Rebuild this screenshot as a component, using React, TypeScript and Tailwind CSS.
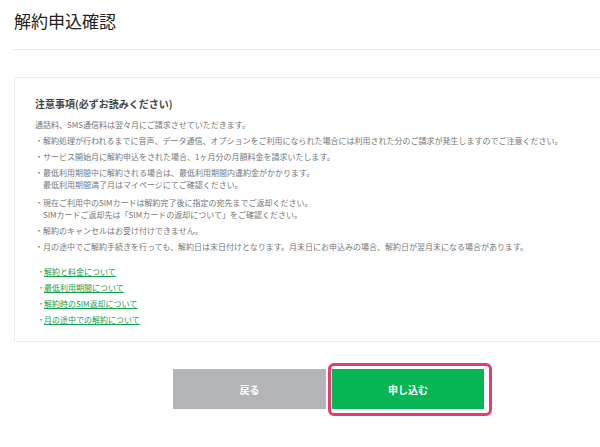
import React from "react";

const items: string[][] = [
  ["解約処理が行われるまでに音声、データ通信、オプションをご利用になられた場合には利用された分のご請求が発生しますのでご注意ください。"],
  ["サービス開始月に解約申込をされた場合、1ヶ月分の月額料金を請求いたします。"],
  ["最低利用期間中に解約される場合は、最低利用期間内違約金がかかります。", "最低利用期間満了月はマイページにてご確認ください。"],
  ["現在ご利用中のSIMカードは解約完了後に指定の宛先までご返却ください。", "SIMカードご返却先は「SIMカードの返却について」をご確認ください。"],
  ["解約のキャンセルはお受け付けできません。"],
  ["月の途中でご解約手続きを行っても、解約日は末日付けとなります。月末日にお申込みの場合、解約日が翌月末になる場合があります。"],
];

const links = [
  "解約と料金について",
  "最低利用期間について",
  "解約時のSIM返却について",
  "月の途中での解約について",
];

export default function App() {
  return (
    <div
      className="w-[600px] h-[447px] overflow-hidden bg-white"
      style={{ fontFamily: '"Noto Sans CJK JP", "Noto Sans", sans-serif' }}
    >
      <div className="w-[643px] pl-[14px]">
        <div className="h-[49px] pt-[9px]">
          <h1 className="text-[17px] leading-[24px] text-[#222] font-normal">解約申込確認</h1>
        </div>
        <div className="border-t border-[#e8e8e8] -ml-[1px]" />
        <div className="mt-[27px] border border-[#ececec] pl-[20px] pr-[20px] pt-[19px] pb-[13px]">
          <h2 className="text-[10px] leading-[14px] font-bold text-[#444]">注意事項(必ずお読みください)</h2>
          <div className="mt-[8px] text-[8px] leading-[12px] text-[#777]">
            <p>通話料、SMS通信料は翌々月にご請求させていただきます。</p>
            {items.map((lines, i) => (
              <div key={i} className={`flex ${i === 3 ? "mt-[6px]" : "mt-[4px]"}`}>
                <span className="w-[8px] shrink-0">・</span>
                <div>
                  {lines.map((l, j) => (
                    <p key={j}>{l}</p>
                  ))}
                </div>
              </div>
            ))}
          </div>
          <ul className="mt-[11px] text-[8px] leading-[16px]">
            {links.map((l) => (
              <li key={l} className="flex pl-[2px]">
                <span className="w-[7px] shrink-0 text-[#888]">・</span>
                <a className="text-[#14a04f] underline underline-offset-[1px]">{l}</a>
              </li>
            ))}
          </ul>
        </div>
        <div className="mt-[27px] flex justify-center gap-[6px]">
          <button className="w-[153px] h-[40px] bg-[#b3b4b7] text-white text-[10px] font-bold">戻る</button>
          <div className="relative">
            <button className="w-[152px] h-[40px] bg-[#07b653] text-white text-[10px] font-bold">申し込む</button>
            <div className="absolute left-[-4px] top-[-6px] w-[164px] h-[53px] border-[3px] border-[#ea3a6c] rounded-[6px] pointer-events-none" />
          </div>
        </div>
      </div>
    </div>
  );
}
